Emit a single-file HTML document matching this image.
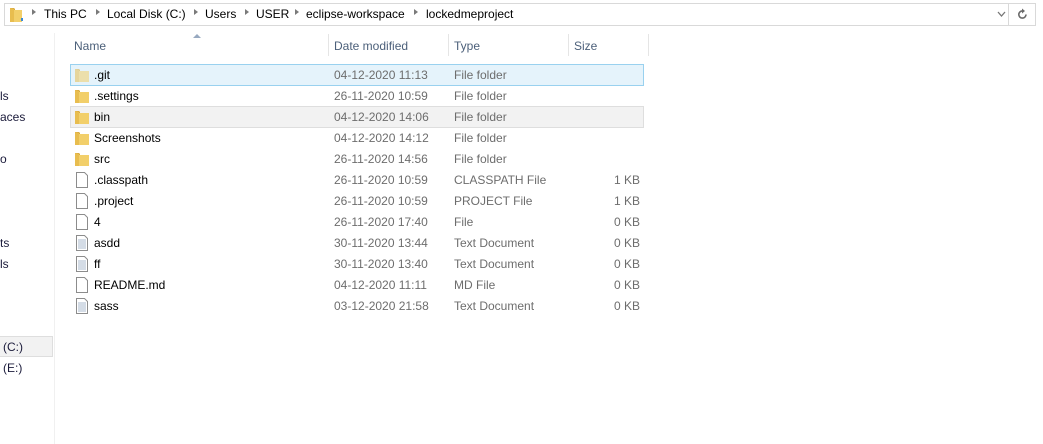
<!DOCTYPE html>
<html><head><meta charset="utf-8"><style>
*{margin:0;padding:0;box-sizing:border-box}
body{width:1043px;height:444px;background:#fff;font-family:"Liberation Sans",sans-serif;font-size:12px;position:relative;overflow:hidden;color:#000}
.a{position:absolute;white-space:nowrap}
.addr{left:4px;top:3px;width:1005px;height:23px;border:1px solid #d9d9d9}
.ref{left:1008px;top:3px;width:28px;height:23px;border:1px solid #d9d9d9}
.crumb{top:7px;font-size:12px;color:#000}
.arr{top:9px;width:0;height:0;border-left:4px solid #7a7a7a;border-top:3.5px solid transparent;border-bottom:3.5px solid transparent}
.hdr{top:39px;color:#4c607a}
.sep{top:34px;width:1px;height:22px;background:#e5e5e5}
.row{left:70px;width:574px;height:22px}
.nm{left:94px}
.dt{left:334px;color:#6d6d6d}
.ty{left:454px;color:#6d6d6d}
.sz{left:580px;width:60px;text-align:right;color:#6d6d6d}
.ic{left:74px}
.nv{color:#1a1a3a}
</style></head><body>
<div class="a addr"></div>
<div class="a ref"></div>
<svg class="a" style="left:8px;top:6px" width="16" height="17" viewBox="0 0 16 17"><path d="M2 2h4l1 1v13H2z" fill="#d9a93c"/><path d="M6 4h8v12H6z" fill="#f2cf6a"/><path d="M2 2v14h4V3z" fill="#e8bd4f"/><rect x="13" y="12" width="2" height="3" fill="#3a8ad6"/></svg>
<div class="a arr" style="left:32px"></div>
<div class="a crumb" style="left:44px">This PC</div>
<div class="a arr" style="left:96px"></div>
<div class="a crumb" style="left:107px">Local Disk (C:)</div>
<div class="a arr" style="left:194px"></div>
<div class="a crumb" style="left:205px">Users</div>
<div class="a arr" style="left:245px"></div>
<div class="a crumb" style="left:256px">USER</div>
<div class="a arr" style="left:295px"></div>
<div class="a crumb" style="left:306px">eclipse-workspace</div>
<div class="a arr" style="left:414px"></div>
<div class="a crumb" style="left:426px">lockedmeproject</div>
<svg class="a" style="left:997px;top:11px" width="9" height="7"><path d="M1 1l3.5 4L8 1" stroke="#777" stroke-width="1.3" fill="none"/></svg>
<svg class="a" style="left:1016px;top:8px" width="13" height="13" viewBox="0 0 13 13"><path d="M10 6.5A3.6 3.6 0 1 1 6.5 2.9" stroke="#6a6a6a" stroke-width="1.6" fill="none"/><path d="M6 0.5v5l3-2.5z" fill="#6a6a6a"/></svg>

<div class="a" style="left:54px;top:33px;width:1px;height:411px;background:#f0f0f0"></div>
<div class="a nv" style="left:0;top:89px">ls</div>
<div class="a nv" style="left:0;top:110px">aces</div>
<div class="a nv" style="left:0;top:152px">o</div>
<div class="a nv" style="left:0;top:236px">ts</div>
<div class="a nv" style="left:0;top:257px">ls</div>
<div class="a" style="left:-1px;top:336px;width:54px;height:21px;background:#f2f2f2;border:1px solid #dedede"></div>
<div class="a nv" style="left:3px;top:340px">(C:)</div>
<div class="a nv" style="left:3px;top:361px">(E:)</div>

<svg class="a" style="left:193px;top:34px" width="8" height="5"><path d="M0 4L4 0l4 4z" fill="#97a9c0"/></svg>
<div class="a hdr" style="left:74px">Name</div>
<div class="a sep" style="left:328px"></div>
<div class="a hdr" style="left:334px">Date modified</div>
<div class="a sep" style="left:448px"></div>
<div class="a hdr" style="left:454px">Type</div>
<div class="a sep" style="left:568px"></div>
<div class="a hdr" style="left:574px">Size</div>
<div class="a sep" style="left:648px"></div>

<div class="a row" style="top:64px;background:#e5f3fb;border:1px solid #99d1ef"></div>
<div class="a row" style="top:106px;background:#f2f2f2;border:1px solid #dedede"></div>

<svg width="0" height="0" style="position:absolute"><defs>
<symbol id="f" viewBox="0 0 16 16"><path d="M1 2h4l1 1v12H1z" fill="#d9a93c"/><path d="M5 4h10v11H5z" fill="#f2cf6a"/><path d="M1 2v13h4V3z" fill="#e8bd4f"/></symbol>
<symbol id="d" viewBox="0 0 16 16"><path d="M2.5 0.5h8l3 3v12h-11z" fill="#fff" stroke="#8c8c8c"/></symbol>
<symbol id="t" viewBox="0 0 16 16"><path d="M2.5 0.5h8l3 3v12h-11z" fill="#fff" stroke="#8c8c8c"/><path d="M4 5h8M4 7h8M4 9h8M4 11h8M4 13h8" stroke="#a8b8cc"/></symbol>
</defs></svg>

<div id="rows"></div>
<script>
var R=[["f",".git","04-12-2020 11:13","File folder",""],["f",".settings","26-11-2020 10:59","File folder",""],["f","bin","04-12-2020 14:06","File folder",""],["f","Screenshots","04-12-2020 14:12","File folder",""],["f","src","26-11-2020 14:56","File folder",""],["d",".classpath","26-11-2020 10:59","CLASSPATH File","1 KB"],["d",".project","26-11-2020 10:59","PROJECT File","1 KB"],["d","4","26-11-2020 17:40","File","0 KB"],["t","asdd","30-11-2020 13:44","Text Document","0 KB"],["t","ff","30-11-2020 13:40","Text Document","0 KB"],["d","README.md","04-12-2020 11:11","MD File","0 KB"],["t","sass","03-12-2020 21:58","Text Document","0 KB"]];
var h="";R.forEach(function(r,i){var y=68+i*21;
h+='<svg class="a ic" style="top:'+(y-1)+'px;'+(i==0?'opacity:.55':'')+'" width="16" height="16"><use href="#'+r[0]+'"/></svg>';
h+='<div class="a nm" style="top:'+y+'px">'+r[1]+'</div><div class="a dt" style="top:'+y+'px">'+r[2]+'</div><div class="a ty" style="top:'+y+'px">'+r[3]+'</div><div class="a sz" style="top:'+y+'px">'+r[4]+'</div>';});
document.getElementById("rows").innerHTML=h;
</script>
</body></html>
